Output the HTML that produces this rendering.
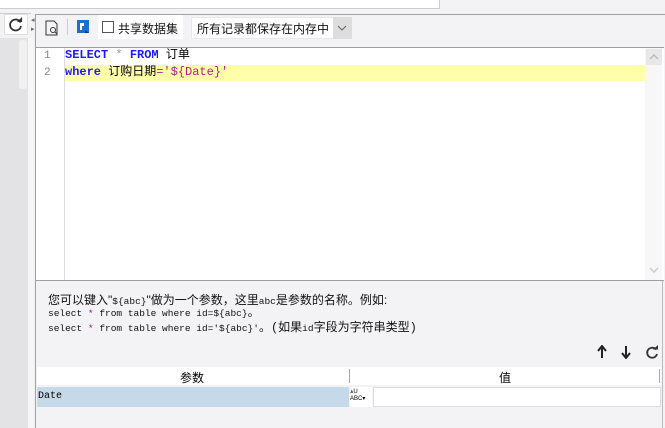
<!DOCTYPE html>
<html><head><meta charset="utf-8"><style>
*{margin:0;padding:0;box-sizing:border-box}
body{width:665px;height:428px;overflow:hidden;background:#f3f3f5;font-family:"Liberation Sans","Noto Sans CJK SC",sans-serif;font-size:12px;position:relative}
.a{position:absolute}
.mono{font-family:"Liberation Mono","Noto Sans CJK SC",monospace}
</style></head><body>
<div class="a" style="left:0;top:0;width:440px;height:9px;background:#fff;border-bottom:1px solid #ccc;border-right:1px solid #ccc"></div>
<div class="a" style="left:0;top:13px;width:31px;height:1px;background:#ccc"></div>
<div class="a" style="left:4px;top:14px;width:24px;height:21px;background:#fff;border:1px solid #e0e0e0"></div>
<svg class="a" style="left:8px;top:17px" width="16" height="16" viewBox="0 0 16 16"><path d="M12.5 5.5A5.5 5.5 0 1 0 13 9" fill="none" stroke="#333" stroke-width="1.8"/><path d="M9 5h5V0z" fill="#333"/></svg>
<div class="a" style="left:31px;top:16px;font-size:7px;color:#666;line-height:9px">◂<br>▸</div>
<div class="a" style="left:0;top:38px;width:28px;height:390px;background:#e3e3e5"></div>
<div class="a" style="left:19px;top:40px;width:8px;height:49px;background:#f0f0f0;border-radius:3px"></div>
<div class="a" style="left:28px;top:38px;width:5px;height:390px;background:#f7f7f7"></div>
<div class="a" style="left:35px;top:14px;width:1px;height:414px;background:#a0a0a0"></div>
<div class="a" style="left:35px;top:14px;width:630px;height:1px;background:#a0a0a0"></div>
<!-- toolbar -->
<svg class="a" style="left:44px;top:20px" width="16" height="16" viewBox="0 0 16 16"><path d="M2 1h8l3 3v11H2z" fill="none" stroke="#333"/><circle cx="9" cy="10" r="2.5" fill="none" stroke="#333"/><path d="M11 12l2 2" stroke="#333"/></svg>
<div class="a" style="left:67px;top:19px;width:1px;height:16px;background:#ccc"></div>
<svg class="a" style="left:76px;top:19px" width="16" height="16" viewBox="0 0 16 16"><rect x="1" y="1" width="12" height="13" fill="#1b6fd1"/><path d="M4 4h4v3H6v4H4z" fill="#fff"/><path d="M9 11l4 3H9z" fill="#333"/></svg>
<div class="a" style="left:98px;top:15px;width:85px;height:24px;background:#fff"></div>
<div class="a" style="left:102px;top:21px;width:12px;height:12px;border:1px solid #555;background:#fff"></div>
<div class="a" style="left:118px;top:20px;font-size:12px;color:#111">共享数据集</div>
<div class="a" style="left:191px;top:17px;width:161px;height:22px;background:#fff;border:1px solid #e8e8e8"></div>
<div class="a" style="left:197px;top:20px;font-size:12px;color:#111">所有记录都保存在内存中</div>
<div class="a" style="left:333px;top:17px;width:19px;height:22px;background:#ddd"></div>
<svg class="a" style="left:337px;top:24px" width="10" height="8"><path d="M1 2l4 4 4-4" fill="none" stroke="#666"/></svg>
<!-- editor -->
<div class="a" style="left:36px;top:47px;width:628px;height:234px;background:#fff;border-top:1px solid #a0a0a0;border-bottom:1px solid #a0a0a0"></div>
<div class="a" style="left:64px;top:48px;width:1px;height:232px;background:#ddd"></div>
<div class="a" style="left:65px;top:65px;width:580px;height:16px;background:#ffffaa"></div>
<div class="a" style="left:645px;top:48px;width:17px;height:232px;background:#f7f7f7"></div>
<div class="a" style="left:646px;top:49px;width:16px;height:16px;background:#e8e8e8"></div>
<svg class="a" style="left:649px;top:54px" width="10" height="6"><path d="M1 5l4-4 4 4" fill="none" stroke="#bbb" stroke-width="1.5"/></svg>
<svg class="a" style="left:649px;top:267px" width="10" height="6"><path d="M1 1l4 4 4-4" fill="none" stroke="#ccc" stroke-width="1.5"/></svg>
<div class="a mono" style="left:44px;top:48px;font-size:11px;color:#888;line-height:17px">1<br>2</div>
<div class="a mono" style="left:65px;top:47px;font-size:12px;line-height:17px;white-space:pre"><span style="color:#1a1aff;font-weight:bold">SELECT</span> <span style="color:#999">*</span> <span style="color:#1a1aff;font-weight:bold">FROM</span> 订单
<span style="color:#1a1aff;font-weight:bold">where</span> 订购日期<span style="color:#c0188c">='${Date}'</span></div>
<!-- help -->
<div class="a" style="left:48px;top:291px;font-size:12px;color:#111">您可以键入"<span class="mono" style="font-size:9.5px">${abc}</span>"做为一个参数，这里<span class="mono" style="font-size:9.5px">abc</span>是参数的名称。例如:</div>
<div class="a mono" style="left:48px;top:306px;font-size:9.5px;line-height:15px;color:#111;white-space:pre">select <span style="color:#a0a">*</span> from table where id=${abc}<span style="font-size:12px">。</span>
select <span style="color:#a0a">*</span> from table where id='${abc}'<span style="font-size:12px">。(如果<span class="mono" style="font-size:9.5px">id</span>字段为字符串类型)</span></div>
<svg class="a" style="left:596px;top:345px" width="12" height="14"><path d="M6 13V2M2 6l4-5 4 5" fill="none" stroke="#222" stroke-width="2"/></svg>
<svg class="a" style="left:620px;top:345px" width="12" height="14"><path d="M6 1v11M2 8l4 5 4-5" fill="none" stroke="#222" stroke-width="2"/></svg>
<svg class="a" style="left:644px;top:345px" width="16" height="16" viewBox="0 0 16 16"><path d="M12 4.5A5 5 0 1 0 13 9" fill="none" stroke="#333" stroke-width="1.8"/><path d="M9 4.5h5V0z" fill="#333"/></svg>
<!-- table -->
<div class="a" style="left:37px;top:367px;width:624px;height:18px;background:#fff"></div>
<div class="a" style="left:349px;top:369px;width:1px;height:14px;background:#aaa"></div>
<div class="a" style="left:659px;top:369px;width:1px;height:14px;background:#aaa"></div>
<div class="a" style="left:180px;top:369px;font-size:12px">参数</div>
<div class="a" style="left:499px;top:369px;font-size:12px">值</div>
<div class="a" style="left:37px;top:387px;width:312px;height:20px;background:#c6d9e8"></div>
<div class="a mono" style="left:38px;top:391px;font-size:10px">Date</div>
<div class="a" style="left:350px;top:387px;width:22px;height:20px;background:#fff;font-size:6px;line-height:7px;padding-top:2px">⩓U<br>ABC▾</div>
<div class="a" style="left:373px;top:387px;width:288px;height:20px;background:#fff;border:1px solid #ddd"></div>
<div class="a" style="left:662px;top:281px;width:1px;height:147px;background:#bbb"></div>
</body></html>
